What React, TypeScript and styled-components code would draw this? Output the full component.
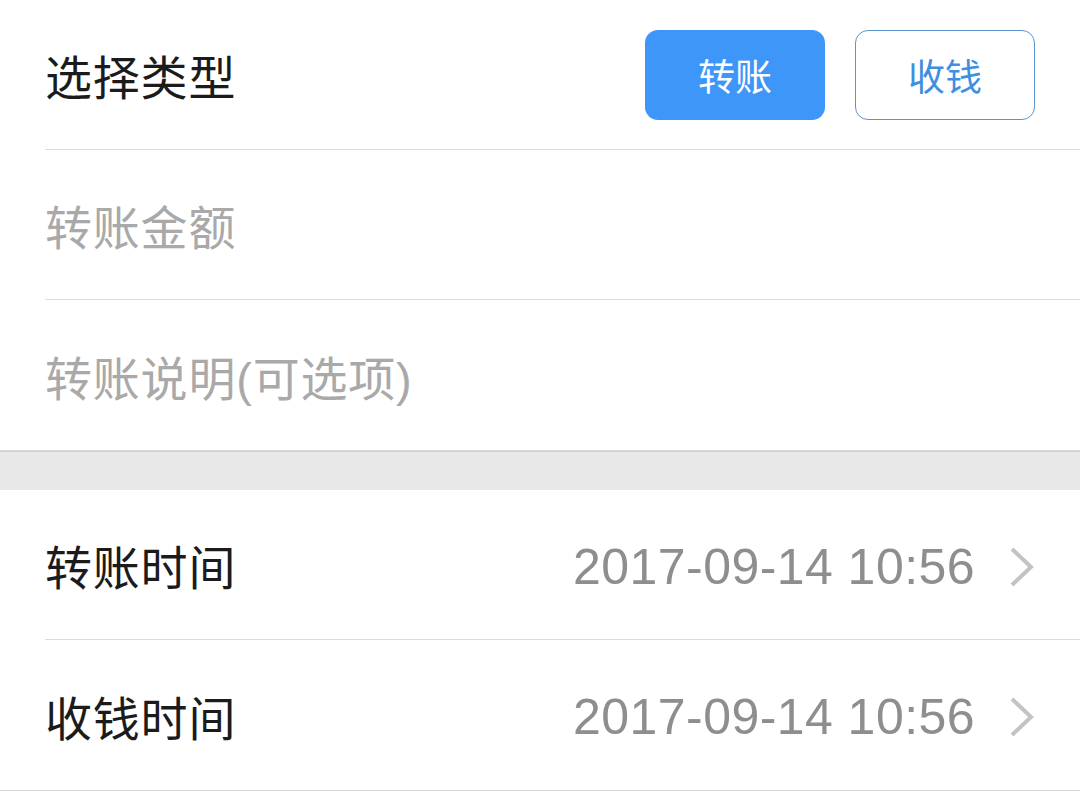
import React from "react";
import styled, { createGlobalStyle } from "styled-components";

const GlobalStyle = createGlobalStyle`
  html, body {
    margin: 0;
    padding: 0;
    background: #ffffff;
  }
  body {
    font-family: "Liberation Sans", "Noto Sans CJK SC", sans-serif;
    -webkit-font-smoothing: antialiased;
  }
`;

const Page = styled.div`
  width: 1080px;
  background: #fff;
`;

const Group = styled.div`
  background: #fff;
  border-bottom: 1px solid #d6d6d6;
`;

const Row = styled.div<{ $last?: boolean }>`
  box-sizing: border-box;
  height: 150px;
  margin-left: 45px;
  padding-right: 45px;
  display: flex;
  align-items: center;
  justify-content: space-between;
  border-bottom: ${({ $last }) => ($last ? "none" : "1px solid #dcdcdc")};
`;

const Label = styled.span<{ $placeholder?: boolean }>`
  font-size: 47px;
  color: ${({ $placeholder }) => ($placeholder ? "#a9a9a9" : "#1b1b1b")};
  letter-spacing: 0.8px;
`;

const Spacer = styled.div`
  height: 38px;
  background: #e8e8e8;
  border-top: 1px solid #d0d0d0;
`;

const ButtonGroup = styled.div`
  display: flex;
  gap: 30px;
`;

const TypeButton = styled.button<{ $active?: boolean }>`
  box-sizing: border-box;
  width: 180px;
  height: 90px;
  border-radius: 13px;
  font-family: inherit;
  font-size: 37px;
  cursor: pointer;
  background: ${({ $active }) => ($active ? "#3e96f8" : "#fff")};
  color: ${({ $active }) => ($active ? "#fff" : "#3f8fe0")};
  border: ${({ $active }) => ($active ? "none" : "1px solid #5b95cf")};
`;

const Value = styled.div`
  display: flex;
  align-items: center;
  gap: 34px;
  padding-top: 4px;
`;

const DateText = styled.span`
  font-size: 50px;
  letter-spacing: 0.45px;
  color: #8e8e8e;
`;

const Chevron = () => (
  <svg width="26" height="42" viewBox="0 0 26 42">
    <path d="M3 3 L22 21 L3 39" fill="none" stroke="#c3c3c3" strokeWidth="4" />
  </svg>
);

export default function App() {
  return (
    <Page>
      <GlobalStyle />
      <Group>
        <Row>
          <Label>选择类型</Label>
          <ButtonGroup>
            <TypeButton $active>转账</TypeButton>
            <TypeButton>收钱</TypeButton>
          </ButtonGroup>
        </Row>
        <Row>
          <Label $placeholder>转账金额</Label>
        </Row>
        <Row $last>
          <Label $placeholder>转账说明(可选项)</Label>
        </Row>
      </Group>
      <Spacer />
      <Group>
        <Row>
          <Label>转账时间</Label>
          <Value>
            <DateText>2017-09-14 10:56</DateText>
            <Chevron />
          </Value>
        </Row>
        <Row $last>
          <Label>收钱时间</Label>
          <Value>
            <DateText>2017-09-14 10:56</DateText>
            <Chevron />
          </Value>
        </Row>
      </Group>
    </Page>
  );
}
